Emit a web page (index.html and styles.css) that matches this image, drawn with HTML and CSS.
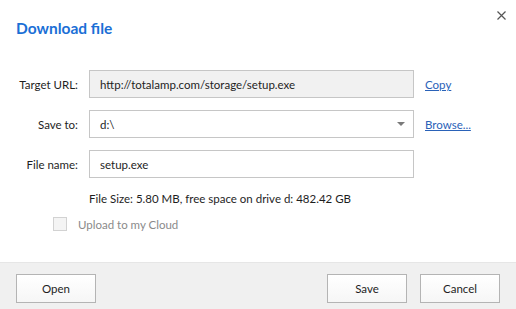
FILE: index.html
```
<!DOCTYPE html>
<html lang="en">

<head>
    <meta charset="UTF-8">
    <title>Download file</title>
    <link rel="stylesheet" href="styles.css">
</head>

<body>
    <div class="dialog">
        <header class="head">
            <h1>Download file</h1>
            <button class="close" aria-label="Close">
                <svg width="9" height="9" viewBox="0 0 9 9">
                    <path d="M0.5 0.5 L8.5 8.5 M8.5 0.5 L0.5 8.5" stroke="#555" stroke-width="1.2" fill="none" />
                </svg>
            </button>
        </header>

        <section class="form">
            <label class="label">Target URL:</label>
            <div class="field readonly">http://totalamp.com/storage/setup.exe</div>
            <a class="link" href="#">Copy</a>

            <label class="label">Save to:</label>
            <div class="field select">
                <span>d:\</span>
                <span class="arrow"></span>
            </div>
            <a class="link" href="#">Browse...</a>

            <label class="label">File name:</label>
            <div class="field">setup.exe</div>
            <span></span>

            <span></span>
            <p class="info">File Size: 5.80 MB, free space on drive d: 482.42 GB</p>
        </section>

        <div class="cloud">
            <span class="check"></span>
            <span>Upload to my Cloud</span>
        </div>

        <footer class="foot">
            <button class="btn">Open</button>
            <div class="right">
                <button class="btn">Save</button>
                <button class="btn">Cancel</button>
            </div>
        </footer>
    </div>
</body>

</html>
```

FILE: styles.css
```
* {
    box-sizing: border-box;
}

body {
    margin: 0;
    background-color: #fff;
    font-family: Lato, "Open Sans", sans-serif;
    font-size: 11.5px;
    color: #1e1e1e;
}

.dialog {
    height: 309px;
    display: flex;
    flex-direction: column;
}

.head {
    position: relative;
    padding: 19px 16px 0;
    height: 70px;
}

h1 {
    margin: 0;
    font-size: 15.5px;
    font-weight: 700;
    color: #1b6fd6;
}

.close {
    position: absolute;
    top: 11px;
    right: 10px;
    border: 0;
    background: none;
    padding: 0;
    width: 9px;
    height: 9px;
}

.close svg {
    display: block;
}

.form {
    display: grid;
    grid-template-columns: 78px 325px auto;
    column-gap: 11px;
    row-gap: 12px;
    align-items: center;
}

.label {
    text-align: right;
}

.field {
    height: 28px;
    border: 1px solid #c6c6c6;
    padding: 0 10px;
    display: flex;
    align-items: center;
    background-color: #fff;
}

.readonly {
    background-color: #f1f1f1;
}

.select {
    justify-content: space-between;
}

.arrow {
    width: 0;
    height: 0;
    border-left: 4px solid transparent;
    border-right: 4px solid transparent;
    border-top: 4px solid #7a7a7a;
    margin-right: -2px;
}

.link {
    color: #2a62b8;
    text-decoration: underline;
}

.info {
    margin: 0;
    grid-column: 2 / 4;
    white-space: nowrap;
    padding-top: 2px;
}

.cloud {
    display: flex;
    align-items: center;
    gap: 11px;
    padding-left: 53px;
    margin-top: 12px;
    color: #8a8a8a;
}

.check {
    width: 14px;
    height: 14px;
    border: 1px solid #d2d2d2;
    background-color: #f4f4f4;
}

.foot {
    margin-top: auto;
    height: 47px;
    border-top: 1px solid #e6e6e6;
    background-color: #f0f0f0;
    display: flex;
    justify-content: space-between;
    padding: 11px 16px 0;
}

.right {
    display: flex;
    gap: 13px;
}

.btn {
    width: 80px;
    height: 29px;
    border: 1px solid #b4b4b4;
    background: linear-gradient(#ffffff, #f6f6f6);
    font-family: Lato, "Open Sans", sans-serif;
    font-size: 11.5px;
    color: #1e1e1e;
    padding: 0;
}
```
